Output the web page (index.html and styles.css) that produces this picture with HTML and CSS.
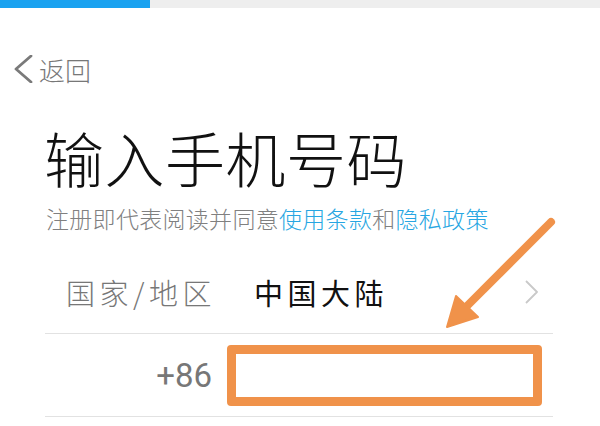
FILE: index.html
```html
<!DOCTYPE html>
<html lang="zh-CN">
<head>
<meta charset="utf-8">
<title>输入手机号码</title>
<link rel="stylesheet" href="styles.css">
</head>
<body>
<div class="page">
  <div class="progress"><div class="progress-fill"></div></div>
  <div class="back">
    <svg class="back-icon" width="20" height="28" viewBox="0 0 20 28"><polyline points="17,1 2,14 17,27" fill="none" stroke="#7a7a7a" stroke-width="2.8" stroke-linecap="round" stroke-linejoin="round"/></svg>
    <span class="back-text">返回</span>
  </div>
  <h1 class="title">输入手机号码</h1>
  <p class="terms">注册即代表阅读并同意<span class="link">使用条款</span>和<span class="link">隐私政策</span></p>
  <div class="form">
    <div class="row">
      <div class="label">国家/地区</div>
      <div class="value">中国大陆</div>
      <svg class="chev" width="13" height="24" viewBox="0 0 13 24"><polyline points="1,1 12,12 1,23" fill="none" stroke="#c9c9c9" stroke-width="1.8" stroke-linejoin="round"/></svg>
    </div>
    <div class="row">
      <div class="label code">+86</div>
      <input class="phone" type="tel" aria-label="手机号码">
    </div>
  </div>
  <svg class="arrow" width="600" height="426" viewBox="0 0 600 426">
    <line x1="551" y1="222" x2="463" y2="310" stroke="#f0924a" stroke-width="8" stroke-linecap="round"/>
    <polygon points="447,327 456,296 478,317" fill="#f0924a" stroke="#f0924a" stroke-width="2" stroke-linejoin="round"/>
  </svg>
</div>
</body>
</html>
```

FILE: styles.css
```css
html, body {
  margin: 0;
  padding: 0;
  background: #ffffff;
}
.page {
  position: relative;
  width: 600px;
  height: 426px;
  overflow: hidden;
  font-family: "Noto Sans CJK SC", "Noto Sans", sans-serif;
}
.progress {
  height: 8px;
  background: #eeeeee;
}
.progress-fill {
  width: 150px;
  height: 8px;
  background: #1aa2f0;
}
.back {
  display: flex;
  align-items: flex-end;
  margin-top: 47px;
  padding-left: 14px;
  height: 28px;
}
.back-icon {
  display: block;
}
.back-text {
  margin-left: 5px;
  font-size: 26px;
  line-height: 26px;
  font-weight: 300;
  color: #777777;
}
.title {
  margin: 44px 0 0 44px;
  font-size: 60px;
  line-height: 60px;
  font-weight: 300;
  letter-spacing: 0.5px;
  color: #111111;
}
.terms {
  margin: 20px 0 0 46px;
  font-size: 23px;
  line-height: 23px;
  letter-spacing: 0.3px;
  font-weight: 300;
  color: #808080;
}
.link {
  color: #27a6e2;
}
.form {
  margin: 21px 47px 0 45px;
}
.row {
  display: flex;
  align-items: center;
  height: 82px;
  border-bottom: 1px solid #e2e2e2;
}
.label {
  width: 171px;
  text-align: right;
  font-size: 29px;
  letter-spacing: 4.5px;
  font-weight: 300;
  color: #777777;
}
.code {
  width: 167px;
  font-family: Roboto, "Noto Sans", sans-serif;
  font-size: 33px;
  letter-spacing: 0;
  font-weight: 400;
}
.value {
  flex: 1;
  margin-left: 38px;
  font-size: 29px;
  letter-spacing: 4.5px;
  color: #111111;
}
.chev {
  display: block;
  margin-right: 15px;
}
.phone {
  box-sizing: border-box;
  width: 315px;
  height: 61px;
  margin: 0 0 0 15px;
  border: 9.5px solid #f0924a;
  border-radius: 4px;
  background: #ffffff;
  outline: none;
  padding: 0;
}
.arrow {
  position: absolute;
  left: 0;
  top: 0;
  pointer-events: none;
}
```
